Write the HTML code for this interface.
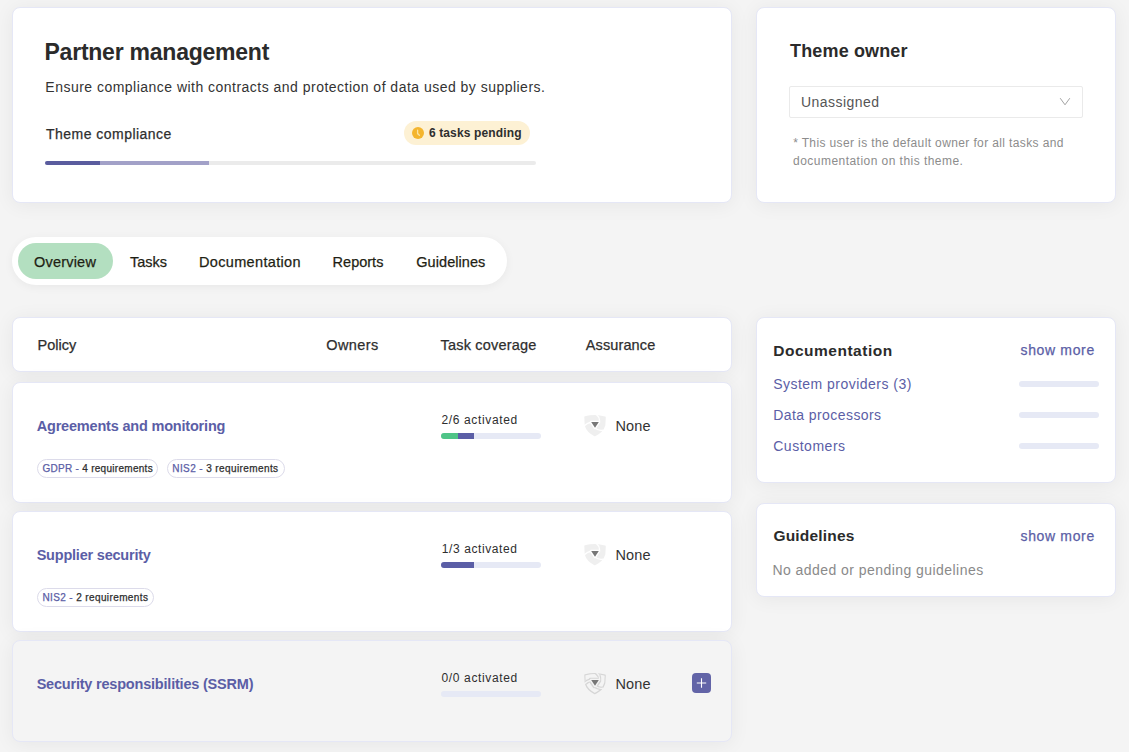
<!DOCTYPE html>
<html><head><meta charset="utf-8"><style>
html,body{margin:0;padding:0}
body{width:1129px;height:752px;overflow:hidden;background:#f4f4f4;position:relative;font-family:"Liberation Sans",sans-serif}
.card{position:absolute;box-sizing:border-box;border:1px solid #e5e7f6;border-radius:8px;box-shadow:0 2px 20px rgba(0,0,0,0.06)}
.pill{position:absolute;border-radius:24px;background:#fff;box-shadow:0 2px 10px rgba(0,0,0,0.05)}
.bar{position:absolute;border-radius:3px;overflow:hidden}
.chip{position:absolute;box-sizing:border-box;border:1px solid #dcdbea;border-radius:10px}
.t{position:absolute;white-space:nowrap}
.med{-webkit-text-stroke:0.25px currentColor}
</style></head><body>
<div class="card" style="left:12px;top:7px;width:720px;height:196px;background:#fff;"></div>
<div class="card" style="left:756px;top:7px;width:360px;height:196px;background:#fff;"></div>
<div class="pill" style="left:12px;top:237px;width:495px;height:48px"></div>
<div style="position:absolute;left:18px;top:243px;width:95px;height:36px;border-radius:18px;background:#b3dfc0"></div>
<div class="card" style="left:12px;top:317px;width:720px;height:55px;background:#fff;"></div>
<div class="card" style="left:12px;top:382px;width:720px;height:121px;background:#fff;"></div>
<div class="card" style="left:12px;top:511px;width:720px;height:121px;background:#fff;"></div>
<div class="card" style="left:12px;top:640px;width:720px;height:102px;background:#f4f4f4;"></div>
<div class="card" style="left:756px;top:317px;width:360px;height:166px;background:#fff;"></div>
<div class="card" style="left:756px;top:503px;width:360px;height:94px;background:#fff;"></div>
<div class="bar" style="left:45px;top:161px;width:491px;height:4px;background:#ebebeb"><div style="position:absolute;left:0px;top:0;width:55px;height:4px;background:#5a5c9e"></div><div style="position:absolute;left:55px;top:0;width:109px;height:4px;background:#a2a1c8"></div></div>
<div style="position:absolute;left:404px;top:121px;width:126px;height:24px;border-radius:12px;background:#fdf1d4"></div>
<svg style="position:absolute;left:412px;top:127px" width="12" height="12" viewBox="0 0 12 12"><circle cx="6" cy="6" r="6" fill="#f4b52e"/><path d="M5.6 3.2 V6.6 L7.4 8.2" stroke="#fbe3a2" stroke-width="1.3" fill="none" stroke-linecap="round"/></svg>
<div style="position:absolute;left:789px;top:86px;width:294px;height:32px;box-sizing:border-box;border:1px solid #eaeaea;border-radius:2px;background:#fff"></div>
<svg style="position:absolute;left:1059px;top:97px" width="12" height="9" viewBox="0 0 12 9"><path d="M1.2 1.2 L6 7.8 L10.8 1.2" stroke="#a3a3a3" stroke-width="1" fill="none"/></svg>
<div class="chip" style="left:37px;top:459px;width:121px;height:19px"></div>
<div class="chip" style="left:167px;top:459px;width:118px;height:19px"></div>
<div class="chip" style="left:37px;top:588px;width:117px;height:19px"></div>
<div id="c1" class="t med" style="left:42.40px;top:463.54px;font-size:10px;line-height:10px;letter-spacing:0.290px;color:#2e2e2e"><span style="color:#5b5ea6">GDPR -</span> 4 requirements</div>
<div id="c2" class="t med" style="left:172.30px;top:463.54px;font-size:10px;line-height:10px;letter-spacing:0.400px;color:#2e2e2e"><span style="color:#5b5ea6">NIS2 -</span> 3 requirements</div>
<div id="c3" class="t med" style="left:42.40px;top:592.53px;font-size:10px;line-height:10px;letter-spacing:0.385px;color:#2e2e2e"><span style="color:#5b5ea6">NIS2 -</span> 2 requirements</div>
<div class="bar" style="left:441px;top:433px;width:100px;height:6px;background:#e6e9f5"><div style="position:absolute;left:0px;top:0;width:17px;height:6px;background:#4fc487"></div><div style="position:absolute;left:17px;top:0;width:16px;height:6px;background:#5b5ea6"></div></div>
<div class="bar" style="left:441px;top:562px;width:100px;height:6px;background:#e6e9f5"><div style="position:absolute;left:0px;top:0;width:33px;height:6px;background:#5b5ea6"></div></div>
<div class="bar" style="left:441px;top:691px;width:100px;height:6px;background:#e6e9f5"></div>
<svg width="0" height="0" style="position:absolute"><defs>
<mask id="shm" maskUnits="userSpaceOnUse" x="0" y="0" width="24" height="24">
<path d="M2.1 3.1 Q12 0.4 22.0 3.3 L21.5 11.4 Q19.8 17.8 11.8 21.5 Q4.2 17.8 2.5 11.4 Z" fill="#fff" stroke="#fff" stroke-width="1.6" stroke-linejoin="round"/><path d="M13.2 0.2 Q17.3 3.6 16.4 8.3 M1.0 12.0 Q4.6 8.3 8.4 8.3 M20.3 16.1 Q15.6 17.4 12.0 13.9" stroke="#000" stroke-width="1.3" fill="none"/>
<path d="M8 8 H16 L12 14 Z" fill="#000" stroke="#000" stroke-width="2.4" stroke-linejoin="round"/></mask>
<filter id="olf" x="-10%" y="-10%" width="120%" height="120%"><feMorphology in="SourceGraphic" operator="erode" radius="0.9" result="e"/><feComposite in="SourceGraphic" in2="e" operator="out"/></filter>
</defs></svg>
<div style="position:absolute;left:583px;top:414px;width:24px;height:24px"><svg width="24" height="24" viewBox="0 0 24 24"><rect width="24" height="24" fill="#efefef" mask="url(#shm)"/><path d="M8.2 8.1 H15.8 L12 13.7 Z" fill="#777"/></svg></div>
<div style="position:absolute;left:583px;top:543px;width:24px;height:24px"><svg width="24" height="24" viewBox="0 0 24 24"><rect width="24" height="24" fill="#efefef" mask="url(#shm)"/><path d="M8.2 8.1 H15.8 L12 13.7 Z" fill="#777"/></svg></div>
<div style="position:absolute;left:583px;top:672px;width:24px;height:24px"><svg width="24" height="24" viewBox="0 0 24 24"><g filter="url(#olf)"><rect width="24" height="24" fill="#d6d6d6" mask="url(#shm)"/></g><path d="M8.2 8.1 H15.8 L12 13.7 Z" fill="#777"/></svg></div>
<div style="position:absolute;left:692px;top:673px;width:19px;height:20px;border-radius:4px;background:#6264a7"></div>
<svg style="position:absolute;left:692px;top:673px" width="19" height="20" viewBox="0 0 19 20"><path d="M9.5 5.3 V14.7 M4.8 10 H14.2" stroke="#fff" stroke-width="1.1"/></svg>
<div class="bar" style="left:1019px;top:381px;width:80px;height:6px;background:#e6e9f5"></div>
<div class="bar" style="left:1019px;top:412px;width:80px;height:6px;background:#e6e9f5"></div>
<div class="bar" style="left:1019px;top:443px;width:80px;height:6px;background:#e6e9f5"></div>
<div id="title" class="t" style="left:44.50px;top:40.53px;font-size:23px;line-height:23px;font-weight:700;color:#2b2b2b;letter-spacing:-0.235px">Partner management</div>
<div id="desc" class="t" style="left:45.34px;top:80.15px;font-size:14px;line-height:14px;font-weight:400;color:#333333;letter-spacing:0.479px">Ensure compliance with contracts and protection of data used by suppliers.</div>
<div id="tc" class="t med" style="left:46.02px;top:127.15px;font-size:14px;line-height:14px;font-weight:400;color:#2e2e2e;letter-spacing:0.467px">Theme compliance</div>
<div id="badge" class="t" style="left:428.89px;top:127.44px;font-size:12px;line-height:12px;font-weight:700;color:#2e2e2e;letter-spacing:0.143px">6 tasks pending</div>
<div id="owner" class="t" style="left:790.09px;top:41.76px;font-size:18px;line-height:18px;font-weight:700;color:#2b2b2b;letter-spacing:0.140px">Theme owner</div>
<div id="unas" class="t" style="left:801.00px;top:94.65px;font-size:14px;line-height:14px;font-weight:400;color:#555555;letter-spacing:0.444px">Unassigned</div>
<div id="fn1" class="t" style="left:793.14px;top:137.04px;font-size:12px;line-height:12px;font-weight:400;color:#8c8c8c;letter-spacing:0.376px">* This user is the default owner for all tasks and</div>
<div id="fn2" class="t" style="left:793.09px;top:155.04px;font-size:12px;line-height:12px;font-weight:400;color:#8c8c8c;letter-spacing:0.459px">documentation on this theme.</div>
<div id="tab1" class="t med" style="left:34.04px;top:254.73px;font-size:14.5px;line-height:14.5px;font-weight:400;color:#1f1f14;letter-spacing:0.200px">Overview</div>
<div id="tab2" class="t med" style="left:130.02px;top:254.73px;font-size:14.5px;line-height:14.5px;font-weight:400;color:#1f1f14;letter-spacing:0.000px">Tasks</div>
<div id="tab3" class="t med" style="left:199.04px;top:254.73px;font-size:14.5px;line-height:14.5px;font-weight:400;color:#1f1f14;letter-spacing:0.333px">Documentation</div>
<div id="tab4" class="t med" style="left:332.61px;top:254.73px;font-size:14.5px;line-height:14.5px;font-weight:400;color:#1f1f14;letter-spacing:0.000px">Reports</div>
<div id="tab5" class="t med" style="left:416.24px;top:254.73px;font-size:14.5px;line-height:14.5px;font-weight:400;color:#1f1f14;letter-spacing:0.067px">Guidelines</div>
<div id="h1" class="t med" style="left:37.51px;top:337.93px;font-size:14.5px;line-height:14.5px;font-weight:400;color:#2e2e2e;letter-spacing:0.000px">Policy</div>
<div id="h2" class="t med" style="left:326.24px;top:337.93px;font-size:14.5px;line-height:14.5px;font-weight:400;color:#2e2e2e;letter-spacing:0.400px">Owners</div>
<div id="h3" class="t med" style="left:440.49px;top:337.93px;font-size:14.5px;line-height:14.5px;font-weight:400;color:#2e2e2e;letter-spacing:0.200px">Task coverage</div>
<div id="h4" class="t med" style="left:585.73px;top:337.93px;font-size:14.5px;line-height:14.5px;font-weight:400;color:#2e2e2e;letter-spacing:0.125px">Assurance</div>
<div id="r1t" class="t" style="left:36.69px;top:418.73px;font-size:14.5px;line-height:14.5px;font-weight:700;color:#5b5ea6;letter-spacing:-0.192px">Agreements and monitoring</div>
<div id="r2t" class="t" style="left:36.66px;top:547.73px;font-size:14.5px;line-height:14.5px;font-weight:700;color:#5b5ea6;letter-spacing:-0.213px">Supplier security</div>
<div id="r3t" class="t" style="left:36.66px;top:676.73px;font-size:14.5px;line-height:14.5px;font-weight:700;color:#5b5ea6;letter-spacing:-0.206px">Security responsibilities (SSRM)</div>
<div id="r1a" class="t" style="left:441.41px;top:413.84px;font-size:12px;line-height:12px;font-weight:400;color:#2e2e2e;letter-spacing:0.650px">2/6 activated</div>
<div id="r2a" class="t" style="left:441.81px;top:542.84px;font-size:12px;line-height:12px;font-weight:400;color:#2e2e2e;letter-spacing:0.583px">1/3 activated</div>
<div id="r3a" class="t" style="left:441.44px;top:671.84px;font-size:12px;line-height:12px;font-weight:400;color:#2e2e2e;letter-spacing:0.650px">0/0 activated</div>
<div id="r1n" class="t" style="left:615.40px;top:418.98px;font-size:14.5px;line-height:14.5px;font-weight:400;color:#333333;letter-spacing:0.133px">None</div>
<div id="r2n" class="t" style="left:615.40px;top:547.98px;font-size:14.5px;line-height:14.5px;font-weight:400;color:#333333;letter-spacing:0.133px">None</div>
<div id="r3n" class="t" style="left:615.40px;top:676.98px;font-size:14.5px;line-height:14.5px;font-weight:400;color:#333333;letter-spacing:0.133px">None</div>
<div id="dh" class="t" style="left:773.20px;top:342.88px;font-size:15.5px;line-height:15.5px;font-weight:700;color:#2b2b2b;letter-spacing:0.517px">Documentation</div>
<div id="dsm" class="t med" style="left:1020.51px;top:343.15px;font-size:14px;line-height:14px;font-weight:400;color:#5b5ea6;letter-spacing:0.650px">show more</div>
<div id="dl1" class="t" style="left:773.21px;top:377.15px;font-size:14px;line-height:14px;font-weight:400;color:#5b5ea6;letter-spacing:0.474px">System providers (3)</div>
<div id="dl2" class="t" style="left:773.20px;top:408.15px;font-size:14px;line-height:14px;font-weight:400;color:#5b5ea6;letter-spacing:0.429px">Data processors</div>
<div id="dl3" class="t" style="left:773.24px;top:438.65px;font-size:14px;line-height:14px;font-weight:400;color:#5b5ea6;letter-spacing:0.525px">Customers</div>
<div id="gh" class="t" style="left:773.41px;top:528.48px;font-size:15.5px;line-height:15.5px;font-weight:700;color:#2b2b2b;letter-spacing:0.200px">Guidelines</div>
<div id="gsm" class="t med" style="left:1020.51px;top:529.15px;font-size:14px;line-height:14px;font-weight:400;color:#5b5ea6;letter-spacing:0.650px">show more</div>
<div id="gt" class="t" style="left:772.45px;top:563.15px;font-size:14px;line-height:14px;font-weight:400;color:#8a8a8a;letter-spacing:0.448px">No added or pending guidelines</div>
</body></html>
